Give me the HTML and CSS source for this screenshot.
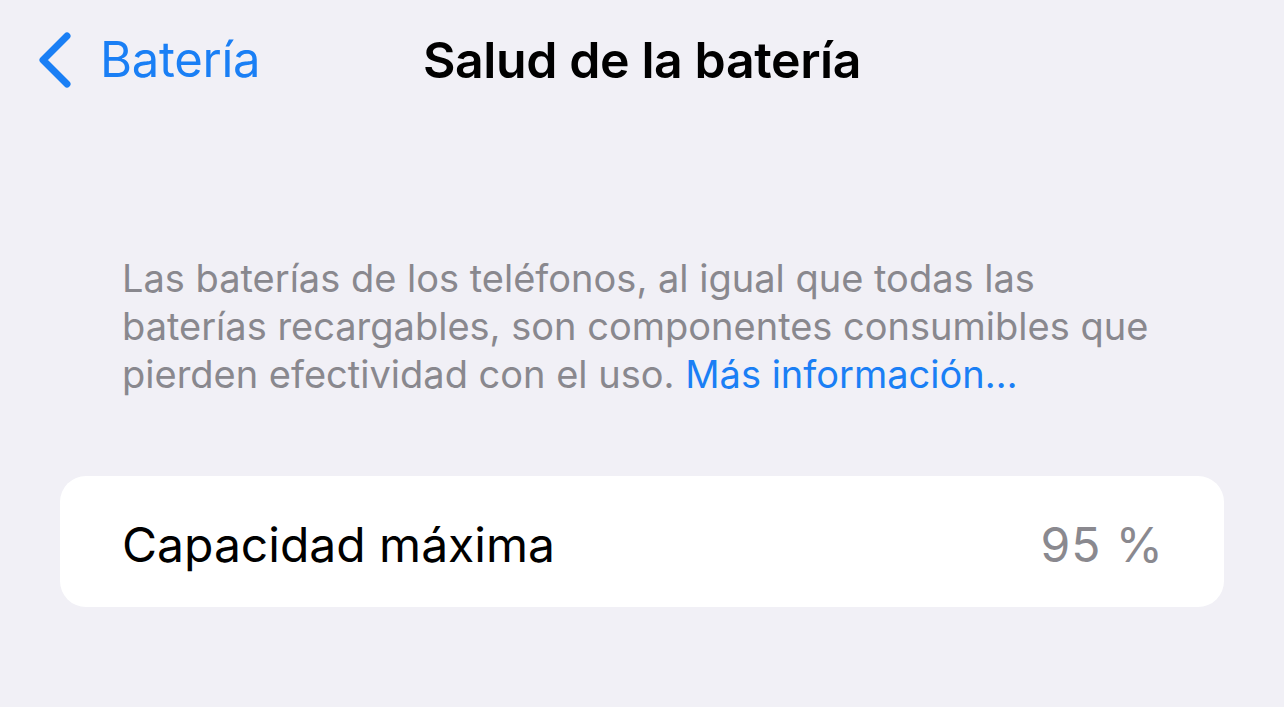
FILE: index.html
```html
<!DOCTYPE html>
<html lang="es">
<head>
    <meta charset="UTF-8">
    <meta name="viewport" content="width=device-width, initial-scale=1.0">
    <title>Salud de la batería</title>
    <link rel="stylesheet" href="styles.css">
</head>
<body>
    <!-- Navigation bar -->
    <div class="navbar">
        <a class="back" href="#">
            <svg class="chevron" width="34" height="56" viewBox="0 0 34 56">
                <path d="M29 4 L5 28 L29 52" fill="none" stroke="#1a7ff5" stroke-width="7" stroke-linecap="round" stroke-linejoin="round"/>
            </svg>
            <span>Batería</span>
        </a>
        <h1 class="title">Salud de la batería</h1>
    </div>

    <p class="note">
        Las baterías de los teléfonos, al igual que todas las baterías recargables, son componentes consumibles que pierden efectividad con el uso. <a href="#" class="link">Más información…</a>
    </p>

    <div class="card">
        <div class="row">
            <span class="label">Capacidad máxima</span>
            <span class="value">95 %</span>
        </div>
    </div>
</body>
</html>
```

FILE: styles.css
```css
* { margin: 0; padding: 0; box-sizing: border-box; }
body {
    background: #f1f0f6;
    font-family: 'Inter', 'Noto Sans', sans-serif;
    color: #000;
    width: 1284px;
    height: 707px;
    overflow: hidden;
}
a { text-decoration: none; }

.navbar {
    position: relative;
    height: 124px;
    display: flex;
    align-items: center;
    justify-content: center;
}
.back {
    position: absolute;
    left: 38px;
    top: 30px;
    display: flex;
    align-items: center;
    gap: 28px;
    color: #1a7ff5;
    font-size: 49px;
    letter-spacing: -0.3px;
}
.title {
    font-size: 50px;
    font-weight: 600;
    letter-spacing: -0.4px;
    margin-top: -4px;
}

.note {
    width: 1045px;
    margin: 130px 0 0 122px;
    font-size: 38px;
    line-height: 48px;
    color: #89888e;
    letter-spacing: 0;
}
.link { color: #1a7ff5; }

.card {
    margin: 78px 60px 0 60px;
    background: #fff;
    border-radius: 26px;
    height: 131px;
    padding: 0 60px 0 62px;
    display: flex;
    align-items: center;
}
.row {
    flex: 1;
    display: flex;
    justify-content: space-between;
    align-items: center;
    font-size: 48px;
    padding-top: 6px;
}
.label { color: #000; }
.value { color: #8a898f; letter-spacing: 1px; }
```
